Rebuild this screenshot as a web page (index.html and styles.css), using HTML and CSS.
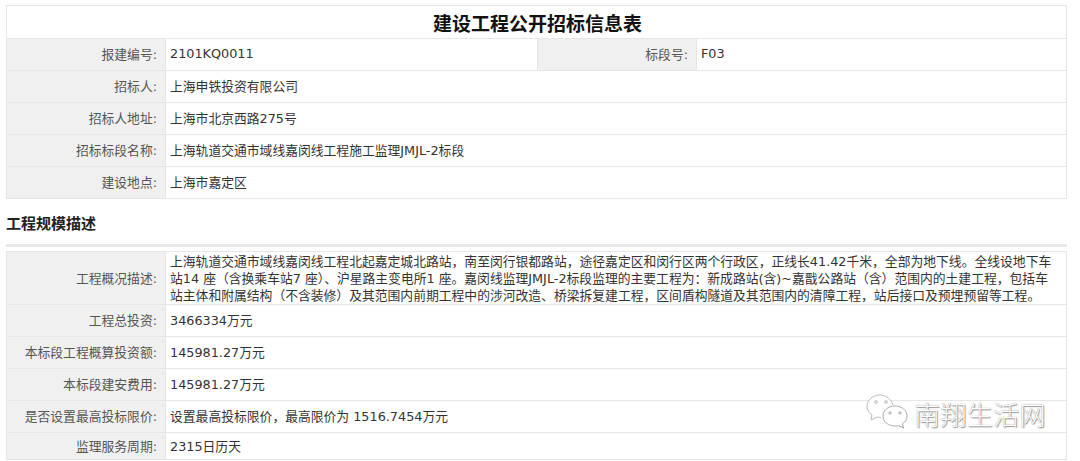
FILE: index.html
```html
<!DOCTYPE html>
<html lang="zh-CN">
<head>
<meta charset="utf-8">
<title>建设工程公开招标信息表</title>
<link rel="stylesheet" href="styles.css">
</head>
<body>
<div class="page">
  <table class="info">
    <colgroup><col class="c-label"><col class="c-val"><col class="c-label"><col></colgroup>
    <tr><th class="title" colspan="4">建设工程公开招标信息表</th></tr>
    <tr><td class="label">报建编号:</td><td class="value">2101KQ0011</td><td class="label">标段号:</td><td class="value">F03</td></tr>
    <tr><td class="label">招标人:</td><td class="value" colspan="3">上海申铁投资有限公司</td></tr>
    <tr><td class="label">招标人地址:</td><td class="value" colspan="3">上海市北京西路275号</td></tr>
    <tr><td class="label">招标标段名称:</td><td class="value" colspan="3">上海轨道交通市域线嘉闵线工程施工监理JMJL-2标段</td></tr>
    <tr><td class="label">建设地点:</td><td class="value" colspan="3">上海市嘉定区</td></tr>
  </table>
  <h2 class="section">工程规模描述</h2>
  <table class="info scale">
    <colgroup><col class="c-label"><col></colgroup>
    <tr class="tall"><td class="label">工程概况描述:</td><td class="value desc">上海轨道交通市域线嘉闵线工程北起嘉定城北路站&#xFF0C;南至闵行银都路站&#xFF0C;途径嘉定区和闵行区两个行政区&#xFF0C;正线长41.42千米&#xFF0C;全部为地下线。全线设地下车<br>站14 座&#xFF08;含换乘车站7 座&#xFF09;、沪星路主变电所1 座。嘉闵线监理JMJL-2标段监理的主要工程为&#xFF1A;新成路站(含)~嘉戬公路站&#xFF08;含&#xFF09;范围内的土建工程&#xFF0C;包括车<br>站主体和附属结构&#xFF08;不含装修&#xFF09;及其范围内前期工程中的涉河改造、桥梁拆复建工程&#xFF0C;区间盾构隧道及其范围内的清障工程&#xFF0C;站后接口及预埋预留等工程。</td></tr>
    <tr><td class="label">工程总投资:</td><td class="value">3466334万元</td></tr>
    <tr><td class="label">本标段工程概算投资额:</td><td class="value">145981.27万元</td></tr>
    <tr><td class="label">本标段建安费用:</td><td class="value">145981.27万元</td></tr>
    <tr><td class="label">是否设置最高投标限价:</td><td class="value">设置最高投标限价&#xFF0C;最高限价为 1516.7454万元</td></tr>
    <tr class="last"><td class="label">监理服务周期:</td><td class="value">2315日历天</td></tr>
  </table>
</div>
<div class="mark">
  <svg class="mark-icon" viewBox="0 0 42 38" width="42" height="38" aria-hidden="true">
    <path d="M27 11C25 5 20 1 14 1 7 1 1 6 1 12c0 4 2 7 5 9l-1 5 6-3c1.500.3 3 .5 4 .4" fill="#fff" stroke="#bbb" stroke-width="1"/>
    <circle cx="10" cy="8" r="1.300" fill="none" stroke="#aaa" stroke-width=".8"/>
    <circle cx="20" cy="8" r="1.300" fill="none" stroke="#aaa" stroke-width=".8"/>
    <path d="M29 12c-7 0-12 4.500-12 10s5 10 12 10c1.500 0 2.500-.2 3.500-.5l5 2.500-1-4.300C39.500 28 41 25.500 41 22c0-5.500-5-10-12-10z" fill="#fff" stroke="#aaa" stroke-width="1"/>
    <circle cx="24" cy="19" r="1.200" fill="none" stroke="#999" stroke-width=".8"/>
    <circle cx="34" cy="19" r="1.200" fill="none" stroke="#999" stroke-width=".8"/>
  </svg>
  <span class="mark-text">南翔生活网</span>
</div>
</body>
</html>
```
FILE: styles.css
```css
html, body {
  margin: 0;
  padding: 0;
  background: #fff;
  height: 461px;
  overflow: hidden;
}
body {
  font-family: "DejaVu Sans", "Noto Sans CJK SC", sans-serif;
  font-size: 12.8px;
  color: #333;
  position: relative;
}
.page {
  padding: 5px 13px 0 6px;
}
.info {
  width: 100%;
  table-layout: fixed;
  border-collapse: collapse;
  border: 1px solid #e6e6e6;
}
.c-label { width: 159px; }
.c-val { width: 372px; }
.info td, .info th {
  border: 1px solid #e6e6e6;
  height: 31px;
  padding: 0 8px 2px 4px;
  box-sizing: border-box;
}
.info .title {
  height: 33px;
  padding: 0 5px 0 7px;
  font-size: 19px;
  font-weight: 700;
  color: #111;
  text-align: center;
  font-family: "Noto Sans CJK SC", sans-serif;
}
.label {
  background: #f0f0f0;
  text-align: right;
  color: #555;
  white-space: nowrap;
}
.info tr td { height: 32px; }
.info td.desc {
  line-height: 17px;
  padding: 0 0 0 4px;
  white-space: nowrap;
  height: 53px;
}
.info tr.last td { height: 27px; }
.section {
  margin: 14px 0 0;
  padding-bottom: 11px;
  border-bottom: 3px solid #e8e8e8;
  font-size: 15px;
  line-height: 20px;
  font-weight: 700;
  color: #222;
  font-family: "Noto Sans CJK SC", sans-serif;
}
.scale {
  margin-top: 4px;
}
.mark {
  position: absolute;
  left: 866px;
  top: 394px;
  display: flex;
  align-items: center;
  gap: 6px;
}
.mark-text {
  font-family: "Noto Sans CJK SC", sans-serif;
  font-weight: 300;
  font-size: 26px;
  letter-spacing: .4px;
  color: #fff;
  text-shadow: 0 0 1px #777, 1px 1px 1px #999;
}
```
